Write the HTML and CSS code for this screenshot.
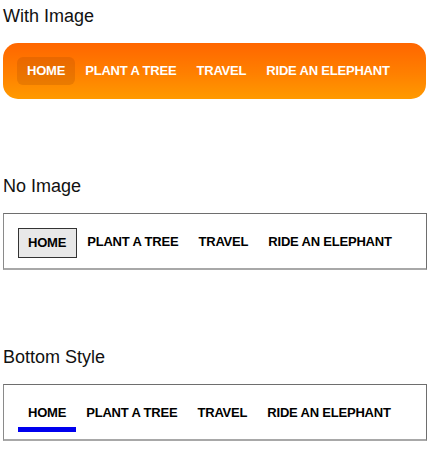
FILE: index.html
```html
<!DOCTYPE html>
<html>
<head>
<meta charset="utf-8">
<link rel="stylesheet" href="styles.css">
</head>
<body>
  <section class="demo">
    <h2 class="title">With Image</h2>
    <ul class="nav nav-image">
      <li class="item active">HOME</li>
      <li class="item">PLANT A TREE</li>
      <li class="item">TRAVEL</li>
      <li class="item">RIDE AN ELEPHANT</li>
    </ul>
  </section>
  <section class="demo">
    <h2 class="title">No Image</h2>
    <ul class="nav nav-plain">
      <li class="item active">HOME</li>
      <li class="item">PLANT A TREE</li>
      <li class="item">TRAVEL</li>
      <li class="item">RIDE AN ELEPHANT</li>
    </ul>
  </section>
  <section class="demo">
    <h2 class="title">Bottom Style</h2>
    <ul class="nav nav-bottom">
      <li class="item active">HOME</li>
      <li class="item">PLANT A TREE</li>
      <li class="item">TRAVEL</li>
      <li class="item">RIDE AN ELEPHANT</li>
    </ul>
  </section>
</body>
</html>
```
FILE: styles.css
```css
html, body {
  margin: 0;
  padding: 0;
  background: #fff;
}
body {
  padding: 5px 3px 0 3px;
  font-family: "Liberation Sans", Arial, sans-serif;
  width: 424px;
}
.demo + .demo {
  margin-top: 76px;
}
.title {
  margin: 0 0 16px 0;
  font-size: 18px;
  line-height: 22px;
  font-weight: normal;
  color: #111;
}
.nav {
  list-style: none;
  margin: 0;
  padding: 14px 14px 0 14px;
  box-sizing: border-box;
  display: flex;
  align-items: flex-start;
}
.item {
  padding: 0 10px;
  line-height: 28px;
  font-size: 13px;
  font-weight: bold;
  letter-spacing: -0.2px;
  white-space: nowrap;
}
.nav-image {
  height: 56px;
  width: 423px;
  border-radius: 15px;
  background: linear-gradient(to bottom, #ff6600 0%, #ff8000 55%, #ff9a00 100%);
}
.nav-image .item {
  color: #fff;
}
.nav-image .active {
  background: rgba(160, 70, 0, 0.22);
  border-radius: 6px;
}
.nav-plain,
.nav-bottom {
  height: 57px;
  width: 424px;
  border: 1px solid #6e6e6e;
  border-left-color: #8a8a8a;
  border-bottom: 2px solid #a8a8a8;
}
.nav-plain .item,
.nav-bottom .item {
  color: #000;
}
.nav-plain .active {
  background: #e8e8e8;
  border: 1px solid #333;
  padding: 0 10px 0 9px;
}
.nav-bottom .active {
  border-bottom: 5px solid #0000ee;
}
```
